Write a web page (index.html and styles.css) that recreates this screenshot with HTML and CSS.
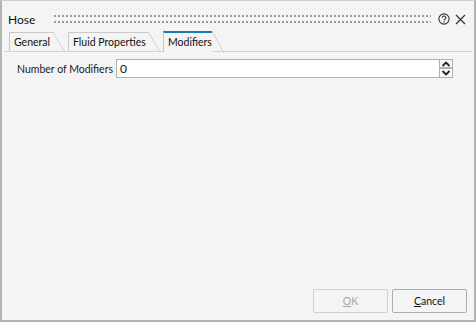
FILE: index.html
```html
<!DOCTYPE html>
<html>
  <head>
    <title>Hose</title>
    <link rel="stylesheet" href="styles.css">
  </head>
  <body>
    <div class="window">
      <div class="titlebar">
        <span class="title">Hose</span>
        <div class="grip"></div>
        <svg class="help" width="12" height="12" viewBox="0 0 12 12">
          <circle cx="6" cy="6" r="5.1" fill="none" stroke="#333" stroke-width="1.1"/>
          <path d="M4.3 4.8 A1.75 1.75 0 1 1 6.9 6.3 C6.3 6.6 6 6.9 6 7.6" fill="none" stroke="#333" stroke-width="1.1"/>
          <rect x="5.4" y="8.4" width="1.2" height="1.2" fill="#333"/>
        </svg>
        <svg class="close" width="11" height="11" viewBox="0 0 11 11">
          <path d="M1 1 L10 10 M10 1 L1 10" stroke="#333" stroke-width="1.2"/>
        </svg>
      </div>

      <div class="tabs">
        <div class="tab tab-general">General</div>
        <div class="tab tab-fluid">Fluid Properties</div>
        <div class="tab tab-modifiers active">Modifiers</div>
      </div>

      <div class="form">
        <label class="field-label">Number of Modifiers</label>
        <div class="spin">
          <input class="spin-input" type="text" value="0">
          <div class="spin-buttons">
            <div class="spin-btn">
              <svg width="12" height="8" viewBox="0 0 12 8"><path d="M2.5 6 L6 2.5 L9.5 6" fill="none" stroke="#222" stroke-width="1.8"/></svg>
            </div>
            <div class="spin-btn">
              <svg width="12" height="8" viewBox="0 0 12 8"><path d="M2.5 2 L6 5.5 L9.5 2" fill="none" stroke="#222" stroke-width="1.8"/></svg>
            </div>
          </div>
        </div>
      </div>

      <div class="content"></div>

      <div class="actions">
        <button class="btn" disabled><u>O</u>K</button>
        <button class="btn"><u>C</u>ancel</button>
      </div>
    </div>
  </body>
</html>
```

FILE: styles.css
```css
body {
  margin: 0;
  background: #f4f4f4;
  font-family: Lato, "Liberation Sans", sans-serif;
  font-size: 10.5px;
  color: #1a1a1a;
}

.window {
  width: 476px;
  height: 322px;
  box-sizing: border-box;
  border: 2px solid #b4b4b4;
  border-top: 1px solid #cfcfcf;
  background: #f4f4f4;
  display: flex;
  flex-direction: column;
}

.titlebar {
  height: 30px;
  box-sizing: border-box;
  padding: 6px 8px 0 6px;
  display: flex;
  align-items: center;
}

.title {
  font-size: 12px;
  color: #111;
}

.grip {
  flex: 1;
  height: 8px;
  margin: 0 7px 0 17px;
  background-image:
    linear-gradient(90deg, #f4f4f4 2px, transparent 2px),
    linear-gradient(#9c9c9c 2px, transparent 2px);
  background-size: 4px 6px;
}

.help {
  margin-right: 5px;
}

.tabs {
  display: flex;
  height: 20px;
  margin: 0 2px;
  padding-left: 5px;
  border-bottom: 1px solid #d2d2d2;
}

.tab {
  position: relative;
  margin-top: 1px;
  height: 19px;
  box-sizing: border-box;
  padding: 3px 0 0 4px;
  border-top: 1px solid #c9c9c9;
  border-left: 1px solid #c9c9c9;
  margin-right: 15px;
  color: #111;
  white-space: nowrap;
}

.tab-general {
  width: 44px;
}

.tab-fluid {
  width: 80px;
}

.tab-modifiers {
  width: 49px;
}

.tab::after {
  content: '';
  position: absolute;
  top: -1px;
  right: -12px;
  width: 12px;
  height: 20px;
  background: linear-gradient(to top right, transparent calc(50% - 0.7px), #c9c9c9 50%, transparent calc(50% + 0.7px));
}

.tab.active {
  margin-top: 0;
  height: 21px;
  border-top: 2px solid #1c78b0;
  background: #f4f4f4;
}

.tab.active::after {
  top: -2px;
  height: 22px;
  background:
    linear-gradient(to top right, transparent calc(50% - 0.7px), #c9c9c9 50%, #f4f4f4 calc(50% + 0.7px));
}

.form {
  display: flex;
  align-items: center;
  padding: 7px 21px 0 15px;
}

.field-label {
  margin-right: 3px;
  white-space: nowrap;
}

.spin {
  flex: 1;
  display: flex;
}

.spin-input {
  flex: 1;
  min-width: 0;
  height: 19px;
  box-sizing: border-box;
  border: 1px solid #b0b0b0;
  border-right: none;
  padding: 0 3px;
  font: inherit;
  font-size: 12px;
  color: #111;
  background: #fff;
  outline: none;
}

.spin-buttons {
  display: flex;
  flex-direction: column;
}

.spin-btn {
  width: 14px;
  height: 9px;
  box-sizing: border-box;
  border: 1px solid #b0b0b0;
  background: #f8f8f8;
  display: flex;
  align-items: center;
  justify-content: center;
}

.spin-btn + .spin-btn {
  height: 10px;
}

.content {
  flex: 1;
}

.actions {
  display: flex;
  justify-content: flex-end;
  gap: 4px;
  padding: 0 7px 7px 0;
}

.btn {
  width: 75px;
  height: 24px;
  border: 1px solid #adadad;
  border-radius: 2px;
  background: #f4f4f4;
  font: inherit;
  color: #111;
}

.btn:disabled {
  border-color: #cfcfcf;
  color: #a6a6a6;
}
```
